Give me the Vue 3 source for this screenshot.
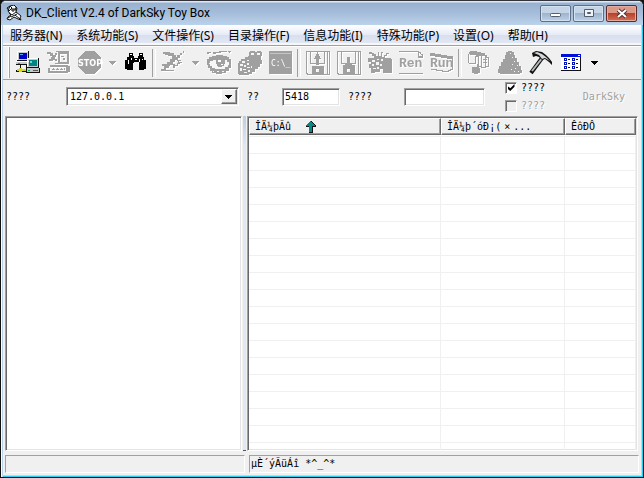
<script setup>
import { ref } from 'vue'

const menus = ['服务器(N)', '系统功能(S)', '文件操作(S)', '目录操作(F)', '信息功能(I)', '特殊功能(P)', '设置(O)', '帮助(H)']
const host = ref('127.0.0.1')
const port = ref('5418')
const password = ref('')
const optionA = ref(true)
const optionB = ref(false)
const rowCount = 19
</script>

<template>
  <div class="window">
    <header class="titlebar">
      <svg class="app-icon" width="16" height="16" viewBox="0 0 16 16">
        <path d="M4 1l4-1 3 3-1 4 5 4-1 2 1 2-3-1-4-2-4 3-3-1 1-2 3-2-3-4z" fill="#fff" stroke="#111" />
        <path d="M1 3l3-2 2 2-3 3zM6 4h2v2H6zM9 3h1v2H9zM3 8l3 2 4-3M5 12l6-3M9 10l5 4M2 13l3-2" fill="none" stroke="#111" />
      </svg>
      <h1>DK_Client V2.4 of DarkSky Toy Box</h1>
      <div class="controls">
        <button class="ctl" aria-label="Minimize"><svg width="12" height="11" viewBox="0 0 12 11"><rect x=".5" y="5.5" width="10" height="3" rx="1" fill="#fff" stroke="#535d6b" /></svg></button>
        <button class="ctl" aria-label="Maximize"><svg width="12" height="11" viewBox="0 0 12 11"><path d="M1.500 1.500h9v7h-9zM4.500 4.500h3v1h-3z" fill="#eef3f8" stroke="#535d6b" /></svg></button>
        <button class="ctl close" aria-label="Close"><svg width="12" height="11" viewBox="0 0 12 11"><path d="M2 2l8 7M10 2L2 9" stroke="#53333a" stroke-width="4" /><path d="M2 2l8 7M10 2L2 9" stroke="#fff" stroke-width="2" /></svg></button>
      </div>
    </header>

    <nav class="menubar">
      <button v-for="m in menus" :key="m">{{ m }}</button>
    </nav>

    <div class="toolbar">
      <span class="grip"></span>
      <button class="tool" aria-label="Connect">
        <svg viewBox="0 0 24 24">
          <path d="M1 0h12v10H1zM0 10h14v4H0zM10 7h13v10H10zM10 17h14v5H10z" fill="#111" />
          <path d="M1 0h11v9H1zM0 10h13v3H0zM11 7h11v9H11zM11 17h12v4H11z" fill="#c6c9cc" />
          <path d="M1 0h11v1H2v8H1zM11 7h11v1H12v8h-1zM0 10h13v1H0z" fill="#fff" />
          <path d="M3 2h8v6H3z" fill="#0000c8" /><path d="M4 3h3v1H4z" fill="#5aa0ff" />
          <path d="M13 9h8v6h-8z" fill="#008585" /><path d="M14 10h2v2h-2z" fill="#70d8c8" />
          <path d="M4 14h1v5H4zM0 19h10v2H0z" fill="#111" /><path d="M1 18h2v2H1zM5 18h5v2H5zM3 17h3v4H3z" fill="#d7d91b" />
          <path d="M12 19h2v1h-2zM2 12h2v1H2z" fill="#00b84a" /><path d="M17 19h5v1h-5z" fill="#555" />
        </svg>
      </button>
      <button class="tool off" disabled aria-label="Disconnect">
        <svg viewBox="0 0 24 24">
          <path d="M0 1h4v1h2v2h2V2h2v2H9v2H8v2h2v2H8V9H6v1H2V8h2V6h1V5H3V3H0zM9 0h13v1H9z" />
          <path fill-rule="evenodd" d="M11 1h11v12H8v-1h3zM13 3v8h7V3z" />
          <path fill-rule="evenodd" d="M3 14h18v1h2v6h-2v1H1v-5h2zM3 16v4h16v-4z" />
          <path d="M14 5h3v1h-3zM16 7h2v2h-2zM5 18h1v-1h1v1h1v1H5zM9 18h1v-1h1v1h1v1H9zM13 18h1v-1h1v1h1v1h-3zM17 17h1v2h-1z" />
        </svg>
      </button>
      <button class="tool off" disabled aria-label="Stop">
        <svg viewBox="0 0 24 24"><path d="M7 0h9l7 7v9l-7 7H7l-7-7V7z" /><text x="12" y="15" text-anchor="middle" class="stop-text">STOP</text></svg>
      </button>
      <button class="drop off" disabled aria-label="Stop options"><svg viewBox="0 0 8 4"><path d="M0 0h7v1H6v1H5v1H4v1H3V3H2V2H1V1H0z" /></svg></button>
      <button class="tool" aria-label="Find">
        <svg viewBox="0 0 24 24">
          <path d="M5 2h4v3h1v2h4V5h1V2h4v4h1v3h2v9h-2v1h-5v-7h-1v-1h-4v1H9v7H3v-1H1V9h2V6h2z" />
          <path d="M6 3h2v1H6zM16 3h2v1h-2zM4 9h1v4H4zM7 7h1v2H7zM15 8h1v3h-1v3h-1v-3h1zM11 8h2v1h-2zM18 8h1v1h-1z" fill="#fff" />
        </svg>
      </button>
      <span class="sep"></span>
      <button class="tool off" disabled aria-label="Run process">
        <svg viewBox="0 0 24 24">
          <path d="M2 1h7v1h4v2h2v2h1V4h3V2h3V0h1v2h-2v2h-2v3h-2v2h3v1h-4V9h-2v2h-2v2h2v4h-2v-3h-3v1H8v2H5v2h8v1H0v-2h3v-3H1v-2h5v-2h3V8h2V5H7V4H4V3H2z" />
          <path d="M17 9h1v2h3v1h-4zM14 14h2v-2h3v1h-2v2h-3z" />
        </svg>
      </button>
      <button class="drop off" disabled aria-label="Run options"><svg viewBox="0 0 8 4"><path d="M0 0h7v1H6v1H5v1H4v1H3V3H2V2H1V1H0z" /></svg></button>
      <button class="tool off" disabled aria-label="View">
        <svg viewBox="0 0 24 24">
          <path d="M0 1h4v1H2v1H0zM6 1h6V0h8v1h-6v1H9v1H6zM21 0h3v1h-1v1h-1z" />
          <path d="M0 8h2V6h3V5h4V4h7v1h4v1h2v2h2v9h-2v3h-3v2h-4v1H9v-1H5v-2H3v-3H1v-3H0z" />
          <path d="M2 12h1v-2h3V9h3V8h8v1h3v2h2v3h-1v2h-3v2H8v-1H5v-2H3v-2H2z" fill="#f6f6f6" />
          <path d="M9 8h9v5h-1v2h-2v1h-4v-1h-1v-2H9z" /><path d="M11 9h3v2h-3zM14 13h2v1h-2z" fill="#fff" />
          <path d="M6 20h1v1H6zM10 20h2v1h-2zM15 20h2v1h-2z" fill="#f6f6f6" />
        </svg>
      </button>
      <button class="tool off" disabled aria-label="Debug">
        <svg viewBox="0 0 24 24">
          <path d="M12 0h5v1h2V0h4v1h1v4h-1v4h1v4h-2v3h-2v2h-3v3h-3v2h-3v1H1v-1H0V12h1v-2h2V8h4V6h3V5h1V1h1z" />
          <path d="M13 2h3v2h-3zM19 2h3v2h-3zM4 10h3v2H4zM9 9h2v1H9zM9 12h2v2H9zM2 13h3v2H2zM6 14h2v2H6zM2 17h2v3H2zM5 18h3v1H5zM9 16h3v1H9zM6 21h3v1H6zM10 19h2v2h-2zM13 15h1v2h-1z" fill="#f5f5f5" />
        </svg>
      </button>
      <button class="tool off" disabled aria-label="Command line">
        <svg viewBox="0 0 24 24"><path d="M0 0h23v23H0z" /><path d="M1 2h21v1H1z" fill="#c4c4c4" /><text x="2" y="15" class="cmd-text">C:\_</text></svg>
      </button>
      <span class="sep"></span>
      <button class="tool off" disabled aria-label="Upload">
        <svg viewBox="0 0 24 24">
          <path fill-rule="evenodd" d="M0 0h24v24H1v-1H0zM1 1v21h1v1h19V1h-2v12H4V1zM5 1v11h13V1zM22 1v22h1V1z" />
          <path d="M11 1h1v2h1v2h1v2h1v1h-2v6h-3V8H8V7h1V5h1V3h1z" /><path fill-rule="evenodd" d="M6 15h12v8H6zM10 18v3h3v-3z" />
        </svg>
      </button>
      <button class="tool off" disabled aria-label="Download">
        <svg viewBox="0 0 24 24">
          <path fill-rule="evenodd" d="M0 0h24v24H1v-1H0zM1 1v21h1v1h19V1h-2v12H4V1zM5 1v11h13V1zM22 1v22h1V1z" />
          <path d="M10 6h3v6h2v2H8v-2h2z" /><path fill-rule="evenodd" d="M6 14h12v9H6zM10 18v3h3v-3z" />
        </svg>
      </button>
      <button class="tool off" disabled aria-label="Delete">
        <svg viewBox="0 0 24 24">
          <path d="M1 1h3v1h2v1h2v2h2V1h1v4h2V1h2v1h-1v4h2V4h2V2h3v1h-2v2h-2v2h6v1h1v14h-9v-4h-3v3H7v1H3v-5H1v-4h2v-2H0V7h6V5H4V3H1z" />
          <path d="M4 9h3v2H4zM9 8h2v1H9zM13 8h2v2h-2zM4 13h2v2H4zM8 11h3v3H8zM5 17h3v1H5zM12 13h2v2h-2zM9 16h2v2H9z" fill="#f5f5f5" />
        </svg>
      </button>
      <button class="tool off" disabled aria-label="Rename">
        <svg viewBox="0 0 24 24"><path d="M0 0h20v1h2v2h2v4h-5V1H0zM20 2v3h3V4h-1V3h-1V2zM0 22h24v1H0z" /><text x="0" y="16" class="tool-text">Ren</text></svg>
      </button>
      <button class="tool off" disabled aria-label="Run">
        <svg viewBox="0 0 24 24"><path d="M0 2h5v1h6v1h6v1h6v14h-2v1h-2v1h-3v-1h2v-1h2v-1h2V8h-5V7h-6V6H5V5H0zM1 18h6v1h6v1h4v1h-5v-1H6v-1H1z" /><text x="0" y="16" class="tool-text">Run</text></svg>
      </button>
      <span class="sep"></span>
      <button class="tool off" disabled aria-label="Mail">
        <svg viewBox="0 0 24 24">
          <path fill-rule="evenodd" d="M3 0h7v1h4v1h4v2h2v2h2v10h-3v1h-5v-1h-3V6H9V4H3V3H2V1h1zM12 6v9h2V5h-2zM15 5v11h3V5zM19 7v8h2V7z" />
          <path d="M1 3h1v9H1zM2 12h7v1H2zM8 5h1v8H8zM5 16h5v-3h2v4h1v5h-2v1H7v-1H5zM16 8h4v1h-4zM16 11h4v1h-4z" />
        </svg>
      </button>
      <button class="tool off" disabled aria-label="Alert">
        <svg viewBox="0 0 24 24">
          <path d="M10 0h4v1h2v3h1v3h2v4h2v4h2v4h1v3h-2v1H2v-1H0v-4h1v-3h2v-4h2V8h2V4h1V1h2z" />
          <path d="M12 2h1v1h-1zM14 6h1v1h-1zM16 10h1v1h-1zM14 13h1v1h-1zM19 14h1v1h-1zM17 17h1v1h-1zM13 18h1v1h-1zM20 20h1v1h-1zM16 20h1v1h-1z" fill="#f5f5f5" />
        </svg>
      </button>
      <button class="tool" aria-label="Tools">
        <svg viewBox="0 0 24 24" class="smooth">
          <path d="M13 7L2 22" stroke="#111" stroke-width="4" /><path d="M14 6L3 20" stroke="#b4b8ba" stroke-width="2" />
          <path d="M3 2l4-2 6 1 4 3 3 3 3 4v3l-3-3-4-3-3 1-3-3-3-1-3 1z" fill="#111" /><path d="M5 2l3-1 5 2 4 3 4 4-5-3-3 1-3-4z" fill="#d3d7d9" />
        </svg>
      </button>
      <button class="tool" aria-label="View list">
        <svg viewBox="0 0 24 24">
          <path d="M1 3h20v17H1z" fill="#111" /><path d="M1 3h19v16H1z" fill="#fff" /><path d="M1 3h20v3H1z" fill="#0010d8" />
          <path d="M18 4h2v1h-2z" fill="#fff" />
          <path fill="#0010b8" fill-rule="evenodd" d="M4 7h3v3H4zM5 8v1h1V8zM12 7h3v3h-3zM13 8v1h1V8zM4 11h3v3H4zM5 12v1h1v-1zM12 11h3v3h-3zM13 12v1h1v-1zM4 15h3v3H4zM5 16v1h1v-1zM12 15h3v3h-3zM13 16v1h1v-1z" />
          <path d="M8 8h2v1H8zM16 8h2v1h-2zM8 12h2v1H8zM16 12h2v1h-2zM8 16h2v1H8zM16 16h2v1h-2z" fill="#111" />
        </svg>
      </button>
      <button class="drop" aria-label="View options"><svg viewBox="0 0 8 4"><path d="M0 0h7v1H6v1H5v1H4v1H3V3H2V2H1V1H0z" /></svg></button>
    </div>

    <form class="connection" @submit.prevent>
      <label for="host">????</label>
      <div class="combo sunken">
        <select id="host" v-model="host"><option>127.0.0.1</option></select>
        <span class="combo-arrow"><svg viewBox="0 0 8 4"><path d="M0 0h7v1H6v1H5v1H4v1H3V3H2V2H1V1H0z" /></svg></span>
      </div>
      <label for="port">??</label>
      <input id="port" v-model="port" class="field sunken" type="text" />
      <label for="password">????</label>
      <input id="password" v-model="password" class="field sunken" type="text" />
      <div class="checks">
        <label><input v-model="optionA" type="checkbox" />????</label>
        <label class="muted"><input v-model="optionB" type="checkbox" disabled />????</label>
      </div>
      <span class="brand">DarkSky</span>
    </form>

    <main class="panes">
      <section class="tree sunken"></section>
      <div class="splitter"></div>
      <section class="list sunken">
        <table>
          <thead>
            <tr>
              <th class="name"><div>ÎÄ¼þÃû<svg class="sort" viewBox="0 0 12 12"><path d="M6 0h1v1h1v1h1v1h1v1h1v2H8v6H4V6H1V4h1V3h1V2h1V1h2z" fill="#111" /><path d="M5 0h1v1h1v1h1v1h1v1h1v1H7v6H4V5H1V4h1V3h1V2h1V1h1z" fill="#008a8a" /></svg></div></th>
              <th class="size"><div>ÎÄ¼þ´óÐ¡(<span class="wide">×</span>...</div></th>
              <th><div>ÊôÐÔ</div></th>
            </tr>
          </thead>
          <tbody>
            <tr v-for="n in rowCount" :key="n"><td></td><td></td><td></td></tr>
          </tbody>
        </table>
      </section>
    </main>

    <footer class="status">
      <div></div>
      <div>µÈ´ýÃüÁî *^_^*</div>
    </footer>
  </div>
</template>

<style>
body { background: #111; overflow: hidden; }
</style>

<style scoped>
* { box-sizing: border-box; }
.window {
  height: 100vh;
  display: flex;
  flex-direction: column;
  background: #f0f0f0;
  border: 1px solid #111;
  border-top-color: #33333b;
  border-radius: 6px 6px 0 0;
  box-shadow: inset 1px 0 #fff, inset 2px 0 #b9d1ea, inset -1px -1px #27cdee, inset -2px -2px #b9dcea;
  overflow: hidden;
  padding: 0 2px 2px;
  font-family: "DejaVu Sans Mono", "Liberation Mono", monospace;
  font-size: 10px;
  line-height: 12px;
  color: #000;
}
button, input, select { font: inherit; color: inherit; margin: 0; padding: 0; border: 0; background: none; border-radius: 0; }
svg { display: block; flex: none; }

.titlebar {
  height: 24px;
  flex: none;
  margin: 0 -2px;
  padding: 0 6px 0 5px;
  display: flex;
  align-items: center;
  background: linear-gradient(#dce8f5 0, #dce8f5 1px, #98b1ce 2px, #a5bdda 50%, #bbd2eb);
}
h1 { margin: 0 0 0 4px; flex: 1; font: 12px/18px Roboto, sans-serif; }
.controls { display: flex; gap: 2px; align-self: flex-start; padding-top: 4px; }
.ctl {
  width: 31px;
  height: 17px;
  display: grid;
  place-items: center;
  border: 1px solid #5e6f86;
  border-radius: 2px;
  background: linear-gradient(#c4d4e6 45%, #9eb4cd 50%, #bdd1e8);
  box-shadow: inset 0 0 0 1px #d4e2f0;
}
.ctl.close { border-color: #5c2a2a; background: linear-gradient(#dd9988 45%, #b9412c 50%, #d27154); box-shadow: inset 0 0 0 1px #e4ac9f; }

.menubar {
  height: 20px;
  flex: none;
  display: flex;
  gap: 14px;
  padding: 0 7px;
  background: linear-gradient(#fff, #e5eaf5 50%, #d9def0 50%, #e2e7f4 90%, #f7f7f7 90%);
}
.menubar button { font: 12px/19px "Noto Sans", "Noto Sans CJK SC", sans-serif; white-space: nowrap; }

.toolbar {
  height: 35px;
  flex: none;
  display: flex;
  align-items: center;
  border-top: 1px solid #a0a0a0;
  border-bottom: 1px solid #a0a0a0;
  box-shadow: inset 0 1px #fff;
  padding-left: 5px;
}
.grip { width: 4px; height: 31px; border-left: 1px solid #fff; }
.grip::after { content: ""; display: block; width: 1px; height: 31px; background: #a0a0a0; }
.sep { width: 6px; height: 28px; display: flex; justify-content: center; }
.sep::after { content: ""; width: 2px; border-left: 1px solid #a0a0a0; border-right: 1px solid #fff; }
.tool { width: 31px; height: 30px; display: grid; place-items: center; }
.tool svg { width: 24px; height: 24px; shape-rendering: crispEdges; overflow: visible; }
.tool svg.smooth { shape-rendering: auto; }
.drop { width: 15px; height: 30px; display: grid; place-items: center; }
.drop svg, .combo-arrow svg { width: 8px; height: 4px; shape-rendering: crispEdges; overflow: visible; }
.off svg { fill: #a0a0a0; filter: drop-shadow(1px 1px 0 #fff); }
.stop-text { font: bold 9px "Liberation Sans Narrow", "DejaVu Sans Condensed", sans-serif; fill: #fff; }
.cmd-text { font: 8px "DejaVu Sans Mono", monospace; fill: #fff; }
.tool-text { font: bold 13px "Liberation Mono", monospace; }

.sunken {
  border: 1px solid;
  border-color: #a0a0a0 #fff #fff #a0a0a0;
  box-shadow: inset 1px 1px #696969, inset -1px -1px #e3e3e3;
  background-color: #fff;
}
.connection {
  height: 36px;
  flex: none;
  display: grid;
  grid-template-columns: 60px 173px 43px 58px 64px 81px 57px 1fr;
  align-items: center;
  padding: 0 16px 3px 3px;
}
.combo { height: 19px; position: relative; }
.combo select { appearance: none; width: 100%; height: 100%; padding: 0 18px 0 3px; display: block; }
.combo-arrow {
  position: absolute;
  top: 1px;
  right: 1px;
  bottom: 1px;
  width: 16px;
  display: grid;
  place-items: center;
  background: #f0f0f0;
  border: 1px solid;
  border-color: #fff #696969 #696969 #fff;
  box-shadow: inset -1px -1px #a0a0a0;
  pointer-events: none;
}
.field { width: 100%; height: 18px; padding: 0 2px; min-width: 0; }
.connection > label { white-space: nowrap; }
.connection label[for="port"], .connection label[for="password"] { padding-left: 8px; }
.checks { display: grid; gap: 5px; padding-left: 20px; }
.checks label { display: flex; align-items: center; gap: 4px; height: 13px; white-space: nowrap; }
.checks input { appearance: none; flex: none; width: 12px; height: 12px; display: grid; place-items: center; background: #fff; border: 1px solid; border-color: #a0a0a0 #fff #fff #a0a0a0; box-shadow: inset 1px 1px #696969; }
.checks input:checked::after { content: ""; width: 7px; height: 7px; background: #000; clip-path: polygon(0 28%, 40% 60%, 100% 0, 100% 40%, 40% 100%, 0 68%); }
.checks input:disabled { background: #f0f0f0; }
.muted { color: #a0a0a0; text-shadow: 1px 1px #fff; }
.brand { justify-self: end; color: #a0a0a0; text-shadow: 1px 1px #fff; }

.panes { flex: 1; min-height: 0; display: grid; grid-template-columns: 237fr 5px 391fr; padding: 0 3px 0 2px; }
.splitter { background: linear-gradient(#bccfe2, #dfe8f4 30px); margin: 0 1px; border-bottom: 1px solid #555; }
.list { overflow: hidden; padding: 1px; min-width: 0; }
table { width: 100%; table-layout: fixed; border-collapse: separate; border-spacing: 0; }
th { height: 18px; padding: 0 0 1px; font-weight: normal; text-align: left; }
th.name { width: 192px; }
th.size { width: 124px; }
th div { height: 17px; display: flex; align-items: center; padding-left: 5px; overflow: hidden; white-space: pre; background: #f0f0f0; border: 1px solid; border-color: #fff #696969 #696969 #fff; box-shadow: inset -1px -1px #a0a0a0; }
td { height: 17px; padding: 0; border-top: 1px solid #f0f0f0; border-right: 1px solid #f0f0f0; }
.sort { width: 12px; height: 12px; margin-left: 14px; shape-rendering: crispEdges; }
.wide { width: 12px; text-align: center; }

.status { flex: none; display: grid; grid-template-columns: 240fr 390fr; gap: 4px; padding: 4px 2px 2px 2px; }
.status div { height: 18px; min-width: 0; padding-left: 1px; line-height: 16px; white-space: nowrap; border: 1px solid; border-color: #a0a0a0 #fff #fff #a0a0a0; }
</style>
